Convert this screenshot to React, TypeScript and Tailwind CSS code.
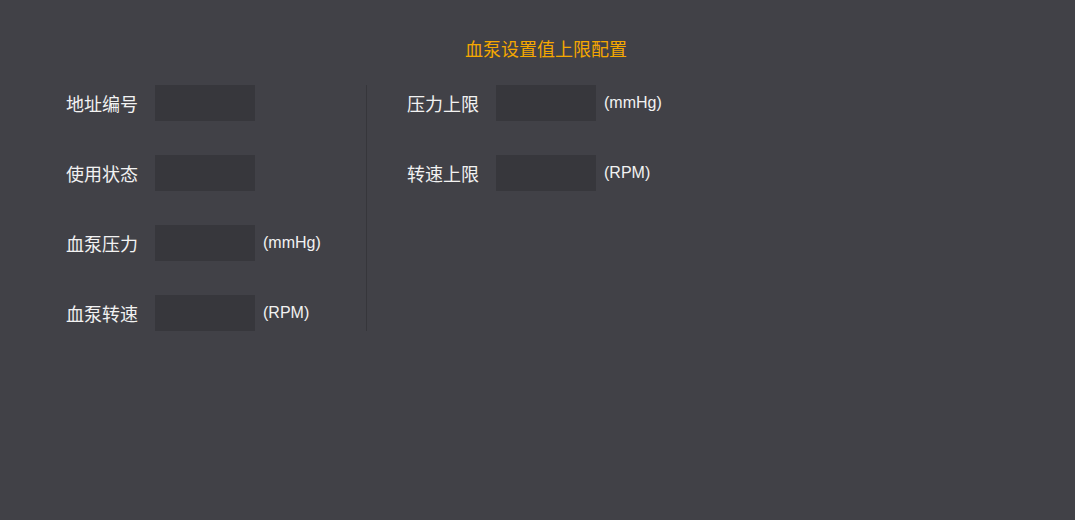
const font = { fontFamily: '"Noto Sans CJK SC", "Liberation Sans", sans-serif' };

type Row = { label: string; unit?: string };

const leftRows: Row[] = [
  { label: "地址编号" },
  { label: "使用状态" },
  { label: "血泵压力", unit: "(mmHg)" },
  { label: "血泵转速", unit: "(RPM)" },
];

const rightRows: Row[] = [
  { label: "压力上限", unit: "(mmHg)" },
  { label: "转速上限", unit: "(RPM)" },
];

function Field({ label, unit }: Row) {
  return (
    <div className="flex items-center h-9">
      <span className="w-[89px] text-[18px] text-[#f2f2f2]">{label}</span>
      <div className="w-[100px] h-9 bg-[#37373c]" />
      {unit && (
        <span className="ml-2 text-[16px] text-[#f2f2f2] font-['Liberation_Sans',sans-serif]">
          {unit}
        </span>
      )}
    </div>
  );
}

export default function App() {
  return (
    <div className="w-full h-[520px] bg-[#414147]" style={font}>
      <div className="pt-[36px] flex justify-center pl-[17px]">
        <h1 className="text-[18px] leading-6 text-[#f5a700]">血泵设置值上限配置</h1>
      </div>
      <div className="flex mt-[25px]">
        <div className="pl-[66px] w-[367px] border-r border-[#36363b] flex flex-col gap-[34px]">
          {leftRows.map((r) => (
            <Field key={r.label} {...r} />
          ))}
        </div>
        <div className="pl-[40px] flex flex-col gap-[34px]">
          {rightRows.map((r) => (
            <Field key={r.label} {...r} />
          ))}
        </div>
      </div>
    </div>
  );
}
